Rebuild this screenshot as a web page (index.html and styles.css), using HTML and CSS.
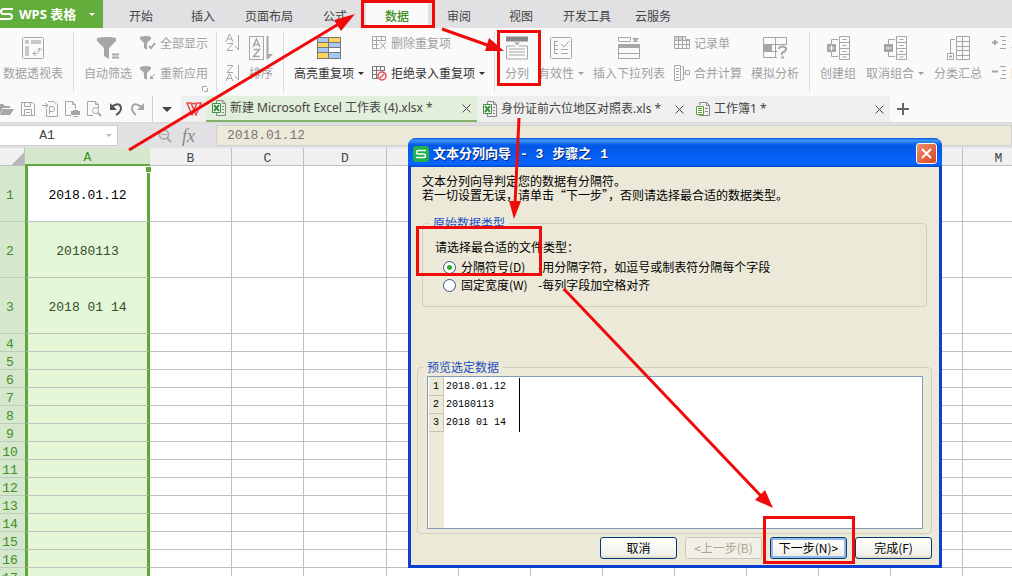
FILE: index.html
```
<!DOCTYPE html>
<html lang="zh-CN">

<head>
  <meta charset="UTF-8">
  <title>WPS 表格</title>
  <link rel="stylesheet" href="styles.css">
</head>

<body>
  <!-- 菜单 -->
  <div class="menu">
    <button class="logo">
      <svg width="14" height="14" viewBox="0 0 14 14"><path d="M13 2H4Q1 2 1 4.500T4 7H9Q12 7 12 9.500T9 12H0" fill="none" stroke="#fff" stroke-width="2" /></svg>
      <b>WPS 表格</b>
      <i class="caret"></i>
    </button>
    <nav class="nav">
      <a href="#">开始</a>
      <a href="#">插入</a>
      <a href="#">页面布局</a>
      <a href="#">公式</a>
      <a href="#" class="on">数据</a>
      <a href="#">审阅</a>
      <a href="#">视图</a>
      <a href="#">开发工具</a>
      <a href="#">云服务</a>
    </nav>
  </div>

  <!-- 功能区 -->
  <div class="ribbon">
    <div class="group g-pivot">
      <button class="big">
        <svg width="22" height="22" viewBox="0 0 22 22"><rect x=".5" y=".5" width="21" height="21" rx="1" /><path class="f" d="M3 3h4v4H3zM9 3h10v4H9zM3 9h4v10H3z" opacity=".6" /><path d="M11 16.500H14Q17.500 16.500 17.500 11M15 13.500L17.500 11L20 13.500M13.500 14L11 16.500L13.500 19" /></svg>
        <span>数据透视表</span>
      </button>
    </div>
    <div class="group g-filter">
      <button class="big">
        <svg width="22" height="22" viewBox="0 0 22 22"><path class="f" d="M0 1Q10 -1 19 1V4L12 11V22L7 19V11L0 4z" /><path d="M15 17.500h7M15 20.500h7" stroke-width="2" /></svg>
        <span>自动筛选</span>
      </button>
      <div class="col">
        <button class="small">
          <svg width="16" height="16" viewBox="0 0 16 16"><path class="f" d="M0 2Q6 0 11 2V4L7 8V15L4 13V8L0 4z" /><path d="M9 11l2 2 4-5" stroke-width="2" /></svg>
          <span>全部显示</span>
        </button>
        <button class="small">
          <svg width="16" height="16" viewBox="0 0 16 16"><path class="f" d="M0 2Q6 0 11 2V4L7 8V15L4 13V8L0 4zM10 10v4h4z" /><path d="M11 13l4-4" /></svg>
          <span>重新应用</span>
        </button>
      </div>
      <svg class="launcher" width="6" height="6" viewBox="0 0 6 6"><path d="M5 .500H.500V5M5.500 2v3.500H2" /></svg>
    </div>
    <div class="group g-sort">
      <div class="col">
        <button class="small" aria-label="升序">
          <svg width="16" height="18" viewBox="0 0 16 18"><path d="M1 8L4.500 0L8 8M2 5h5M2 9.500h6L2 16.500h6M13.500 1v15M10 12l3.500 4" /></svg>
        </button>
        <button class="small" aria-label="降序">
          <svg width="16" height="18" viewBox="0 0 16 18"><path d="M2 1.500h6L2 8.500h6M1 17L4.500 9.500L8 17M2 14.500h5M13.500 1v15M10 12l3.500 4" /></svg>
        </button>
      </div>
      <button class="big">
        <svg width="24" height="24" viewBox="0 0 24 24"><rect x=".5" y=".5" width="14" height="23" /><path d="M4 11L7.500 3L11 11M5 8.500h5M4.500 13.500h6L4.500 20.500h6" stroke-width="1.500" /><path d="M18.500 0v23" stroke-width="2" /><path class="f" d="M18 24l6-6h-6z" /></svg>
        <span>排序</span>
      </button>
    </div>
    <div class="group g-dup">
      <button class="big dark">
        <svg width="24" height="22" viewBox="0 0 24 22"><path d="M0 0h24v22H0z" fill="#777" stroke="none" /><path d="M1 1h10v4H1zM12 6h11v4H12zM1 6h10v4H1zM1 11h10v4H1zM12 16h11v5H12z" fill="#a6c8f5" stroke="none" /><path d="M12 1h11v4H12zM1 6h10v4H1zM1 16h10v5H1z" fill="#ffd35c" stroke="none" /><path d="M12 11h11v4H12z" fill="#fff" stroke="none" /></svg>
        <span>高亮重复项<i class="caret"></i></span>
      </button>
      <div class="col">
        <button class="small">
          <svg width="15" height="14" viewBox="0 0 15 14"><path d="M7 12.500H.500V.500h13V5M.500 4.500h13M.500 8.500h6M4.500 .500v12M9.500 .500V5M8 6l6 7M14 6l-6 7" /></svg>
          <span>删除重复项</span>
        </button>
        <button class="small dark">
          <svg width="15" height="15" viewBox="0 0 15 15"><path d="M6 12.500H.500V.500h12V5M.500 4.500h12M.500 8.500h5M4.500 .500v12M8.500 .500V5" stroke="#777" /><circle cx="10" cy="10" r="4" stroke="#e0504c" stroke-width="1.500" fill="#fafafa" /><path d="M7.500 12.500l5-5" stroke="#e0504c" stroke-width="1.500" /></svg>
          <span>拒绝录入重复项<i class="caret"></i></span>
        </button>
      </div>
    </div>
    <div class="group g-tools">
      <button class="big">
        <svg width="22" height="23" viewBox="0 0 22 23"><path d="M0 0h22v5H0z" fill="#888" stroke="none" /><path class="f" d="M8 6h6l-3 3z" /><path d="M9 9.500H.500v13h21v-13H13M3 12.500h16M3 15.500h16M3 18.500h16" /></svg>
        <span>分列</span>
      </button>
      <button class="big">
        <svg width="22" height="22" viewBox="0 0 22 22"><rect x=".5" y=".5" width="21" height="21" rx="1" /><path d="M8 4.500H4.500v4H8M4.500 8.500v8H8M4.500 12.500H8M11 7l3 3 5-6M11 12.500h7M11 16.500h7" /></svg>
        <span>有效性<i class="caret"></i></span>
      </button>
      <button class="big">
        <svg width="22" height="22" viewBox="0 0 22 22"><path d="M.500 4V.500h12V4M.500 4.500h12M15 4.500h5" /><path class="f" d="M14 1h7l-3.500 4zM0 7h22v4H0z" /><path d="M.500 7.500h21v14H.500zM.500 16.500h21" /></svg>
        <span>插入下拉列表</span>
      </button>
      <div class="col">
        <button class="small">
          <svg width="16" height="14" viewBox="0 0 16 14"><path class="f" d="M0 0h10v4H0z" opacity=".5" /><path d="M.500 .500h11v3h4v9H.500zM.500 4.500h15M.500 8.500h15M4.500 .500v12M8.500 .500v12M12.500 3.500v9" /></svg>
          <span>记录单</span>
        </button>
        <button class="small">
          <svg width="16" height="16" viewBox="0 0 16 16"><path d="M.500 .500h6v15h-6zM2 3.500h3M2 6.500h3M2 9.500h3M2 12.500h3M8 1.500h1.500v13H8M9.500 8h2M11.500 5.500h4v4h-4z" /></svg>
          <span>合并计算</span>
        </button>
      </div>
      <button class="big">
        <svg width="24" height="22" viewBox="0 0 24 22"><path d="M14 20.500H.500V.500h23V8M12.500 .500v20M.500 7.500h23M.500 14.500h14" /><path class="f" d="M0 8h9v6H0z" /><path d="M16 12Q16 9.500 19.500 9.500T23 12Q23 14 20.500 15T19 18M18 20.500h3" stroke-width="2" /></svg>
        <span>模拟分析</span>
      </button>
    </div>
    <div class="group g-outline">
      <button class="big">
        <svg width="23" height="24" viewBox="0 0 23 24"><path d="M12.500 .500h10v23h-10zM12.500 6.500h10M12.500 12.500h10M12.500 18.500h10M15.500 3.500h4M15.500 9.500h4M15.500 15.500h4M15.500 21h4M11 3.500H4.500V8M4.500 16v4.500H11" /><path class="f" d="M0 8h9v8H0z" /><path d="M2 12h5M4.500 9.500v5" stroke="#fff" /></svg>
        <span>创建组</span>
      </button>
      <button class="big">
        <svg width="23" height="24" viewBox="0 0 23 24"><path d="M12.500 .500h10v23h-10zM12.500 6.500h10M12.500 12.500h10M12.500 18.500h10M15.500 3.500h4M15.500 9.500h4M15.500 15.500h4M15.500 21h4M11 3.500H4.500V8M4.500 16v4.500H11" /><path class="f" d="M0 8h9v8H0z" /><path d="M2 12h5" stroke="#fff" /></svg>
        <span>取消组合<i class="caret"></i></span>
      </button>
      <button class="big">
        <svg width="23" height="24" viewBox="0 0 23 24"><path d="M9.500 .500h13v23h-13zM9.500 5.500h13M9.500 10.500h13M9.500 14.500h13M9.500 19.500h13M15.500 .500v23M8 3.500H3.500V17M.500 17.500h6v6h-6zM2 20.500h3M3.500 19v3" /></svg>
        <span>分类汇总</span>
      </button>
      <div class="col">
        <button class="small">
          <svg width="15" height="14" viewBox="0 0 15 14"><path d="M0 6.500h6M3 4v5" stroke-width="2" /><path d="M8 .500h6M10 4.500h4M10 8.500h4M8 12.500h6" /></svg>
          <span>显示明细数据</span>
        </button>
        <button class="small">
          <svg width="15" height="14" viewBox="0 0 15 14"><path d="M0 5.500h6" stroke-width="2" /><path d="M8 .500h6M10 4.500h4M10 8.500h4M8 12.500h6" /></svg>
          <span>隐藏明细数据</span>
        </button>
      </div>
    </div>
  </div>

  <!-- 快速访问 + 文档标签 -->
  <div class="docbar">
    <div class="quick">
      <button aria-label="打开"><svg width="16" height="16" viewBox="0 0 16 16"><path class="f" d="M0 13V3h5l2 2h5v2H5l-3 6zM5 8h11l-4 6H2z" /></svg></button>
      <button aria-label="保存"><svg width="16" height="16" viewBox="0 0 16 16"><path d="M1.500 1.500h11l2 2v11h-13zM4.500 1.500v4h6v-4M4.500 14.500v-6h7v6M6 11.500h4" /></svg></button>
      <button aria-label="输出为PDF"><svg width="16" height="16" viewBox="0 0 16 16"><path d="M4.500 8v7.500h11V4L12 .500H6M7.500 13V5.500H10Q12.500 5.500 12.500 8T10 10.500H7.500M0 4.500h6M3 2L6 4.500L3 7" /></svg></button>
      <button aria-label="打印"><svg width="16" height="16" viewBox="0 0 16 16"><path d="M7 14.500H1.500V.500h7l3 3V8M8.500 .500v3h3" /><path class="f" d="M7 10h9v4H7z" /><path d="M9 9.500h5M9 15.500h5" /></svg></button>
      <button aria-label="打印预览"><svg width="16" height="16" viewBox="0 0 16 16"><path d="M7 14.500H1.500V.500h8l3 3V7M9.500 .500v3h3" /><circle cx="9.500" cy="9.500" r="3" /><path d="M12 12l3 3" stroke-width="2" /></svg></button>
      <button aria-label="撤销"><svg width="16" height="16" viewBox="0 0 16 16"><path d="M3 6Q12 0 13 7Q13 11 8 14" stroke="#555" stroke-width="2" /><path d="M2 2v7h7z" fill="#555" stroke="none" /></svg></button>
      <button aria-label="恢复"><svg width="16" height="16" viewBox="0 0 16 16"><path d="M12 6Q3 0 2 7Q2 11 6 14" stroke-width="2" /><path class="f" d="M14 2v7H7z" /></svg></button>
    </div>
    <button class="more" aria-label="自定义"><i class="caret"></i></button>
    <button class="home" aria-label="在线模板"><svg width="16" height="14" viewBox="0 0 16 14"><path d="M1 1h4l3 7 3-7h4l-5 12-2-4-2 4z" stroke="#e84a4a" stroke-width="1.500" /><path d="M6 1.500h4" stroke="#e84a4a" stroke-width="1.500" /></svg></button>
    <div class="tab tab-1 on">
      <svg width="14" height="16" viewBox="0 0 14 16"><path d="M4.500 3V.500h6l3 3v12h-9V13M10.500 .500v3h3M10 6.500h2M10 9.500h2M10 12.500h2" stroke="#888" /><path d="M.500 3.500h8v9h-8z" fill="#fff" stroke="#3f9140" /><path d="M2 5l5 6M7 5l-5 6" stroke="#3f9140" stroke-width="2" /></svg>
      <a href="#">新建 Microsoft Excel 工作表 (4).xlsx *</a>
      <button class="x" aria-label="关闭"><svg width="9" height="9" viewBox="0 0 9 9"><path d="M.500 .500l8 8M8.500 .500l-8 8" stroke="#444" /></svg></button>
    </div>
    <div class="tab tab-2">
      <svg width="14" height="16" viewBox="0 0 14 16"><path d="M4.500 3V.500h6l3 3v12h-9V13M10.500 .500v3h3M10 6.500h2M10 9.500h2M10 12.500h2" stroke="#888" /><path d="M.500 3.500h8v9h-8z" fill="#fff" stroke="#3f9140" /><path d="M2 5l5 6M7 5l-5 6" stroke="#3f9140" stroke-width="2" /></svg>
      <a href="#">身份证前六位地区对照表.xls *</a>
      <button class="x" aria-label="关闭"><svg width="9" height="9" viewBox="0 0 9 9"><path d="M.500 .500l8 8M8.500 .500l-8 8" stroke="#444" /></svg></button>
    </div>
    <div class="tab tab-3">
      <svg width="14" height="16" viewBox="0 0 14 16"><path d="M3.500 4V1.500h7l3 3v10h-10V13M10.500 1.500v3h3M9 7.500h3M9 10.500h3" stroke="#888" /><path d="M.500 5.500h7v8h-7z" fill="#fff" stroke="#5aa03c" /><path d="M2 7.500h4M2 9.500h4M2 11.500h4" stroke="#5aa03c" /></svg>
      <a href="#">工作簿1 *</a>
      <button class="x" aria-label="关闭"><svg width="9" height="9" viewBox="0 0 9 9"><path d="M.500 .500l8 8M8.500 .500l-8 8" stroke="#444" /></svg></button>
    </div>
    <button class="plus" aria-label="新建"><svg width="12" height="12" viewBox="0 0 12 12"><path d="M0 6h12M6 0v12" stroke="#666" stroke-width="2" /></svg></button>
  </div>

  <!-- 编辑栏 -->
  <div class="formula">
    <div class="namebox">
      <input type="text" value="A1" aria-label="名称框">
      <i class="caret"></i>
    </div>
    <div class="fx">
      <svg width="14" height="14" viewBox="0 0 14 14"><circle cx="6" cy="5.500" r="4.500" stroke-width="1.500" /><path d="M9 9l4 4" stroke-width="2" /><path d="M3.500 5.500h5" /></svg>
      <em>fx</em>
    </div>
    <input class="value" type="text" value="2018.01.12" aria-label="编辑栏">
  </div>

  <!-- 表格 -->
  <div class="sheet">
    <table>
      <colgroup>
        <col class="c-num"><col class="c-a"><col class="c-b"><col class="c-c"><col class="c-d">
        <col class="c-e"><col class="c-e"><col class="c-e"><col class="c-e"><col class="c-e"><col class="c-e"><col class="c-e"><col class="c-e"><col class="c-e">
      </colgroup>
      <thead>
        <tr><th class="corner"></th><th class="sel">A</th><th>B</th><th>C</th><th>D</th><th></th><th></th><th></th><th></th><th></th><th></th><th></th><th></th><th>M</th></tr>
      </thead>
      <tbody id="rows"></tbody>
    </table>
    <i class="handle"></i>
  </div>

  <!-- 分列向导 -->
  <div class="dialog" role="dialog" aria-labelledby="dlgTitle">
    <div class="title">
      <svg width="16" height="16" viewBox="0 0 16 16"><rect width="16" height="16" rx="3" fill="#1fb24c" stroke="none" /><path d="M13 4.500H5Q3.500 4.500 3.500 6.250T5 8H11Q12.500 8 12.500 9.750T11 11.500H3" stroke="#fff" stroke-width="1.500" /></svg>
      <h1 id="dlgTitle">文本分列向导 <span>- 3</span> 步骤之 <span>1</span></h1>
      <button class="close" aria-label="关闭"><svg width="11" height="11" viewBox="0 0 11 11"><path d="M1 1l9 9M10 1l-9 9" stroke="#fff" stroke-width="2" /></svg></button>
    </div>
    <div class="content">
      <p>文本分列向导判定您的数据有分隔符。</p>
      <p>若一切设置无误，请单击“下一步”，否则请选择最合适的数据类型。</p>
      <fieldset class="type">
        <legend>原始数据类型</legend>
        <p>请选择最合适的文件类型：</p>
        <div class="radio">
          <input type="radio" name="type" id="byChar" checked>
          <label for="byChar"><span>分隔符号(D)</span>-用分隔字符，如逗号或制表符分隔每个字段</label>
        </div>
        <div class="radio">
          <input type="radio" name="type" id="byWidth">
          <label for="byWidth"><span>固定宽度(W)</span>-每列字段加空格对齐</label>
        </div>
      </fieldset>
      <fieldset class="preview">
        <legend>预览选定数据</legend>
        <div class="box">
          <table>
            <tr><th>1</th><td>2018.01.12</td></tr>
            <tr><th>2</th><td>20180113</td></tr>
            <tr><th>3</th><td>2018 01 14</td></tr>
          </table>
        </div>
      </fieldset>
      <div class="btns">
        <button>取消</button>
        <button disabled>&lt;上一步(B)</button>
        <button class="default">下一步(N)&gt;</button>
        <button>完成(F)</button>
      </div>
    </div>
  </div>

  <!-- 红色标注 -->
  <svg class="marks" width="1012" height="576" viewBox="0 0 1012 576">
    <path d="M129 150L342 22M442 29L490 46M519 118L515 204M564 289L761 496" />
    <path class="head" d="M355 14L334 20L341 31zM504 51L485 51L489 38zM514 219L509 201L521 201zM773 508L755 500L765 490z" />
    <path d="M362.500 1.500h71v25h-71zM498.500 31.500h41v53h-41zM417.500 227.500h123v47h-123zM764.500 517.500h89v45h-89z" />
  </svg>

  <script>
    var rows = ['2018.01.12', '20180113', '2018 01 14'];

    // 生成行：前三行有数据，行高较大
    var html = '';
    for (var i = 0; i < 17; i++) {
      html += '<tr class="' + (i < 3 ? 'tall' : '') + '"><th>' + (i + 1) + '</th>';
      html += '<td class="sel">' + (rows[i] || '') + '</td>';
      for (var j = 0; j < 12; j++) {
        html += '<td></td>';
      }
      html += '</tr>';
    }
    document.querySelector('#rows').innerHTML = html;
  </script>
</body>

</html>
```
FILE: styles.css
```
* {
  margin: 0;
  padding: 0;
  box-sizing: border-box;
}

body {
  height: 100vh;
  display: flex;
  flex-direction: column;
  position: relative;
  overflow: hidden;
  background: #fafafa;
  font: 12px/16px "Noto Sans CJK SC", sans-serif;
  color: #444;
}

a {
  color: inherit;
  text-decoration: none;
}

button,
input {
  border: 0;
  background: none;
  font: inherit;
  color: inherit;
}

button,
a {
  cursor: pointer;
  white-space: nowrap;
}

svg {
  display: block;
  flex: none;
  fill: none;
  stroke: #a6a6a6;
}

svg .f {
  fill: #a6a6a6;
  stroke: none;
}

.caret {
  display: inline-block;
  flex: none;
  border: 3px solid transparent;
  border-top-color: currentColor;
  border-bottom: 0;
}

/* 菜单 */
.menu {
  flex: none;
  display: flex;
  height: 28px;
  background: #e1e1e3;
}

.logo {
  width: 103px;
  display: flex;
  align-items: center;
  gap: 5px;
  background: #62ad3c;
  color: #fff;
  font-family: "Noto Sans", "Noto Sans CJK SC", sans-serif;
}

.logo .caret {
  margin-left: 8px;
}

.logo b {
  font-size: 13px;
}

.nav {
  display: flex;
  margin-left: 7px;
  padding-top: 3px;
}

.nav a {
  min-width: 62px;
  padding: 5px 11px 0;
  text-align: center;
}

.nav .on {
  background: #fafafa;
  color: #3f8f1f;
  font-weight: 500;
}

/* 功能区 */
.ribbon {
  flex: none;
  display: flex;
  height: 68px;
  padding-top: 4px;
  overflow: hidden;
  color: #a0a0a0;
}

.group {
  flex: none;
  display: flex;
  align-items: flex-start;
  position: relative;
  height: 60px;
  padding-top: 3px;
  border-right: 1px solid #dcdcdc;
}

.group:last-child {
  border: 0;
}

.g-pivot {
  width: 74px;
  padding-left: 3px;
}

.g-filter {
  width: 143px;
  padding-left: 10px;
  gap: 8px;
}

.g-sort {
  width: 67px;
  padding-left: 8px;
  gap: 8px;
}

.g-dup {
  width: 211px;
  padding-left: 10px;
  gap: 8px;
}

.g-tools {
  width: 315px;
  padding-left: 10px;
  gap: 9px;
}

.g-outline {
  padding-left: 10px;
  gap: 10px;
}

.big {
  display: flex;
  flex-direction: column;
  align-items: center;
  gap: 4px;
}

.big svg {
  height: 26px;
}

.col {
  display: flex;
  flex-direction: column;
  gap: 14px;
}

.small {
  display: flex;
  align-items: center;
  gap: 4px;
  height: 16px;
}

.big .caret,
.small .caret {
  margin-left: 4px;
  vertical-align: 3px;
}

.dark {
  color: #333;
}

.launcher {
  position: absolute;
  right: 8px;
  bottom: 0;
}

/* 文档标签 */
.docbar {
  flex: none;
  display: flex;
  height: 27px;
  border-bottom: 1px solid #d8d8d8;
}

.docbar button {
  display: flex;
  align-items: center;
  justify-content: center;
}

.quick {
  display: flex;
  margin-left: -5px;
  padding-right: 3px;
  border-right: 1px solid #d0d0d0;
}

.quick button {
  width: 22px;
}

.more {
  width: 28px;
}

.more .caret {
  border-width: 5px;
  border-bottom: 0;
}

.home {
  width: 25px;
  background: #efefef;
}

.tab {
  display: flex;
  align-items: center;
  gap: 4px;
  padding: 0 6px;
  background: #efefef;
  font-family: "Noto Sans", "Noto Sans CJK SC", sans-serif;
}

.tab.on {
  background: #e2efda;
  border-bottom: 2px solid #82b366;
}

.tab-1 {
  width: 271px;
}

.tab-2 {
  width: 213px;
}

.tab-3 {
  width: 200px;
}

.x {
  margin-left: auto;
}

.plus {
  width: 26px;
}

/* 编辑栏 */
.formula {
  flex: none;
  display: flex;
  height: 25px;
  padding: 2px 0;
  background: #e1e1e3;
  font: 13px/18px "Liberation Mono", monospace;
}

.namebox {
  width: 118px;
  display: flex;
  align-items: center;
  gap: 12px;
  background: #fff;
  border: 1px solid #ccc;
  border-left: 0;
}

.namebox input {
  width: 94px;
  text-align: center;
}

.namebox .caret {
  color: #bbb;
}

.fx {
  width: 98px;
  display: flex;
  align-items: center;
  gap: 10px;
  padding-left: 40px;
}

.fx em {
  font: italic 18px/18px "Liberation Serif", serif;
  color: #888;
}

.value {
  flex: 1;
  padding-left: 10px;
  border: 1px solid #d0d0cc;
  background: #ece9d8;
  color: #777;
}

/* 表格 */
.sheet {
  flex: 1;
  position: relative;
  overflow: hidden;
  background: #fff;
  font: 13px/12px "Liberation Mono", monospace;
}

.sheet table {
  width: 1035px;
  table-layout: fixed;
  border-collapse: separate;
  border-spacing: 0;
}

.c-num {
  width: 25px;
}

.c-a {
  width: 125px;
}

.c-b {
  width: 82px;
}

.c-c,
.c-e {
  width: 72px;
}

.c-d {
  width: 83px;
}

.sheet th,
.sheet td {
  height: 18px;
  padding-top: 4px;
  border-right: 1px solid #c0c0c0;
  border-bottom: 1px solid #c0c0c0;
  text-align: center;
  font-weight: normal;
}

.sheet .tall {
  height: 56px;
}

.sheet thead th {
  background: #f0f0f0;
}

.sheet thead .corner {
  background: linear-gradient(135deg, #f0f0f0 70%, #b8b8b8 70%);
}

.sheet tbody th {
  padding-right: 5px;
  border-right: 0;
  border-color: #bccdb5;
  background: #d5e7cd;
  color: #3f8f1f;
}

.sheet td.sel {
  border-left: 3px solid #61a53d;
  border-right: 3px solid #61a53d;
  background: #e3f6d6;
  color: #334d28;
}

.sheet thead .sel {
  border-right: 0;
  border-bottom: 2px solid #61a53d;
  background: #d5e7cd;
  color: #3f8f1f;
}

.sheet tr:first-child td.sel {
  background: #fff;
  color: #000;
}

.handle {
  position: absolute;
  left: 145px;
  top: 18px;
  width: 7px;
  height: 7px;
  border: 1px solid #fff;
  background: #61a53d;
}

/* 分列向导 */
.dialog {
  position: absolute;
  left: 408px;
  top: 138px;
  width: 534px;
  border: 3px solid #0a3fd0;
  border-top: 0;
  border-radius: 8px 8px 0 0;
  background: #ece9d8;
  color: #000;
  line-height: 14px;
}

.title {
  display: flex;
  align-items: center;
  gap: 4px;
  height: 29px;
  margin: 0 -3px;
  padding: 2px 5px 0;
  border-radius: 8px 8px 0 0;
  background: linear-gradient(#0a50d8, #3c96ff 8%, #0458e6 25%, #0560f5 70%, #0666ff 90%, #0348c8);
  color: #fff;
}

.title h1 {
  font-size: 13px;
  line-height: 18px;
  text-shadow: 1px 1px #0a2a80;
}

.title h1 span {
  margin: 0 6px;
  font-family: "Liberation Mono", monospace;
}

.close {
  width: 21px;
  height: 21px;
  display: flex;
  align-items: center;
  justify-content: center;
  margin-left: auto;
  border: 1px solid #fff;
  border-radius: 3px;
  background: linear-gradient(135deg, #f0906f, #d9431c);
}

.content {
  padding: 7px 7px 6px 6px;
}

.content > p {
  padding-left: 5px;
}

fieldset {
  min-width: 0;
  border: 1px solid #d0cfbe;
  border-radius: 4px;
}

legend {
  padding: 0 4px;
  color: #1c4fc0;
}

.type {
  height: 91px;
  margin: 14px 5px 0;
  padding: 10px 12px 0;
}

.type legend {
  margin-left: -6px;
}

.type > p {
  margin-bottom: 4px;
}

.radio {
  display: flex;
  align-items: center;
  gap: 5px;
  height: 18px;
  padding-left: 8px;
}

.radio input {
  appearance: none;
  width: 13px;
  height: 13px;
  border: 1px solid #33557a;
  border-radius: 50%;
  background: #fff;
}

.radio input:checked {
  background: radial-gradient(circle, #2fa82f 2px, #fff 3px);
}

.radio span {
  display: inline-block;
  width: 77px;
}

.preview {
  margin-top: 53px;
  padding: 2px 8px 4px 9px;
}

.preview legend {
  margin-left: -4px;
}

.box {
  height: 153px;
  padding: 1px;
  border: 1px solid #7f9db9;
  background: linear-gradient(90deg, #fff 1px, #ece9d8 1px, #ece9d8 16px, #fff 16px);
}

.box table {
  border-spacing: 0;
  border-right: 1px solid #000;
  font: 10px/16px "Liberation Mono", monospace;
}

.box th {
  width: 15px;
  height: 18px;
  border-right: 1px solid #c8c5b2;
  border-bottom: 1px solid #c8c5b2;
  font-weight: normal;
}

.box td {
  width: 75px;
  padding-left: 2px;
}

.btns {
  display: flex;
  justify-content: flex-end;
  gap: 8px;
  padding-top: 3px;
}

.btns button {
  width: 77px;
  height: 22px;
  border: 1px solid #003c74;
  border-radius: 3px;
  background: linear-gradient(#fff, #f0f0ea 85%, #d8d4c8);
}

.btns button:disabled {
  border-color: #c9c7ba;
  background: #f2f0e6;
  color: #a9a692;
}

.btns .default {
  box-shadow: inset 0 0 0 2px #98b8ea;
}

/* 红色标注 */
.marks {
  position: absolute;
  left: 0;
  top: 0;
  stroke: #f00a0a;
  stroke-width: 3;
  pointer-events: none;
}

.marks .head {
  fill: #f00a0a;
  stroke: none;
}
```
